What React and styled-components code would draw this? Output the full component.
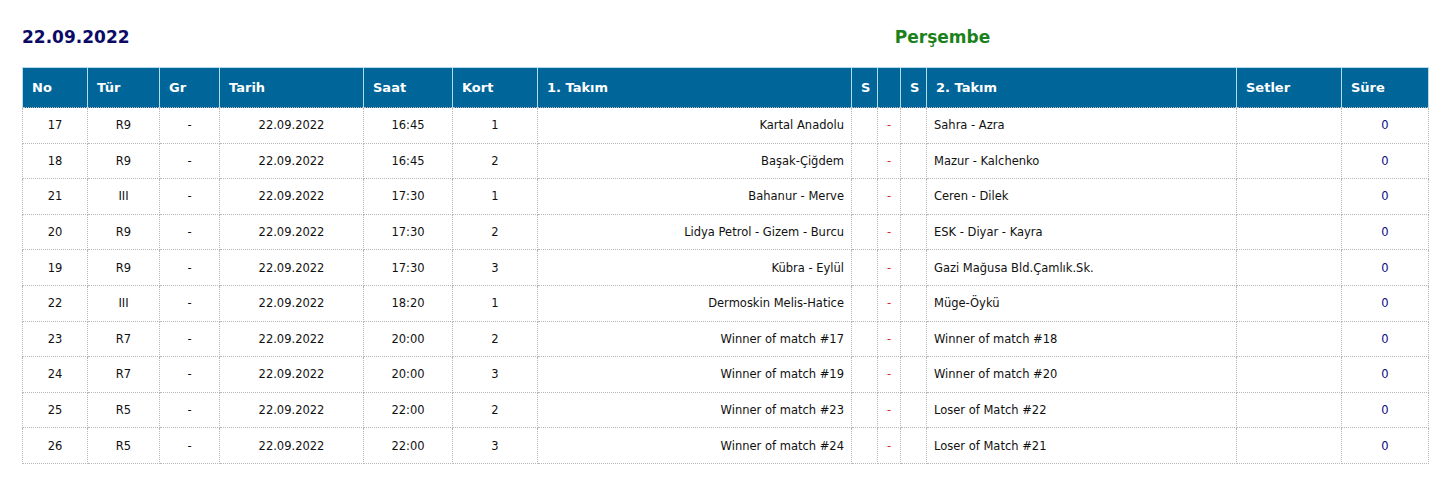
import React from 'react'
import styled, { createGlobalStyle } from 'styled-components'

const GlobalStyle = createGlobalStyle`
  body {
    margin: 0;
    background: #fff;
    font-family: "DejaVu Sans", Verdana, sans-serif;
  }
`

const matches = [
  { no: 17, tur: 'R9', saat: '16:45', kort: 1, t1: 'Kartal Anadolu', t2: 'Sahra - Azra' },
  { no: 18, tur: 'R9', saat: '16:45', kort: 2, t1: 'Başak-Çiğdem', t2: 'Mazur - Kalchenko' },
  { no: 21, tur: 'III', saat: '17:30', kort: 1, t1: 'Bahanur - Merve', t2: 'Ceren - Dilek' },
  { no: 20, tur: 'R9', saat: '17:30', kort: 2, t1: 'Lidya Petrol - Gizem - Burcu', t2: 'ESK - Diyar - Kayra' },
  { no: 19, tur: 'R9', saat: '17:30', kort: 3, t1: 'Kübra - Eylül', t2: 'Gazi Mağusa Bld.Çamlık.Sk.' },
  { no: 22, tur: 'III', saat: '18:20', kort: 1, t1: 'Dermoskin Melis-Hatice', t2: 'Müge-Öykü' },
  { no: 23, tur: 'R7', saat: '20:00', kort: 2, t1: 'Winner of match #17', t2: 'Winner of match #18' },
  { no: 24, tur: 'R7', saat: '20:00', kort: 3, t1: 'Winner of match #19', t2: 'Winner of match #20' },
  { no: 25, tur: 'R5', saat: '22:00', kort: 2, t1: 'Winner of match #23', t2: 'Loser of Match #22' },
  { no: 26, tur: 'R5', saat: '22:00', kort: 3, t1: 'Winner of match #24', t2: 'Loser of Match #21' },
]

// column widths taken from the screenshot
const columns = [
  { label: 'No', w: 65 },
  { label: 'Tür', w: 72 },
  { label: 'Gr', w: 60 },
  { label: 'Tarih', w: 144 },
  { label: 'Saat', w: 89 },
  { label: 'Kort', w: 85 },
  { label: '1. Takım', w: 314 },
  { label: 'S', w: 26 },
  { label: '', w: 23 },
  { label: 'S', w: 26 },
  { label: '2. Takım', w: 310 },
  { label: 'Setler', w: 105 },
  { label: 'Süre', w: 87 },
]

const App = () => {
  return (
    <>
      <GlobalStyle />
      <Page>
        <DayBar>
          <DateTitle>22.09.2022</DateTitle>
          <DayName>Perşembe</DayName>
        </DayBar>
        <Table>
          <colgroup>
            {columns.map((c, i) => (
              <col key={i} style={{ width: c.w }} />
            ))}
          </colgroup>
          <thead>
            <tr>
              {columns.map((c, i) => (
                <Th key={i}>{c.label}</Th>
              ))}
            </tr>
          </thead>
          <tbody>
            {matches.map((m) => (
              <tr key={m.no}>
                <Td>{m.no}</Td>
                <Td>{m.tur}</Td>
                <Td>-</Td>
                <Td>22.09.2022</Td>
                <Td>{m.saat}</Td>
                <Td>{m.kort}</Td>
                <Td $align="right">{m.t1}</Td>
                <Td></Td>
                <Td $red>-</Td>
                <Td></Td>
                <Td $align="left">{m.t2}</Td>
                <Td></Td>
                <Td $navy>0</Td>
              </tr>
            ))}
          </tbody>
        </Table>
      </Page>
    </>
  )
}

export default App

const Page = styled.div`
  padding: 24px 22px 18px 22px;
`

const DayBar = styled.div`
  display: flex;
  align-items: center;
  height: 26px;
  margin-bottom: 17px;
`

const DateTitle = styled.h2`
  margin: 0;
  width: 434px;
  font-size: 17px;
  font-weight: bold;
  color: #0b0b66;
`

const DayName = styled.h2`
  margin: 0;
  flex: 1;
  text-align: center;
  font-size: 17px;
  font-weight: bold;
  color: #1b821b;
`

const Table = styled.table`
  width: 1406px;
  border-collapse: collapse;
  table-layout: fixed;
  font-size: 11.5px;
`

const Th = styled.th`
  height: 40px;
  padding: 0 9px;
  box-sizing: border-box;
  background: #006699;
  color: #fff;
  font-size: 13px;
  font-weight: bold;
  text-align: left;
  border: 1px solid #b5dcec;
  border-bottom: none;
`

const Td = styled.td`
  height: 35.6px;
  padding: 0 7px;
  box-sizing: border-box;
  text-align: ${(p) => p.$align || 'center'};
  color: ${(p) => (p.$red ? '#dd2233' : p.$navy ? '#0a0a80' : '#111')};
  border: 1px dotted #b8b8b8;
  white-space: nowrap;
`
